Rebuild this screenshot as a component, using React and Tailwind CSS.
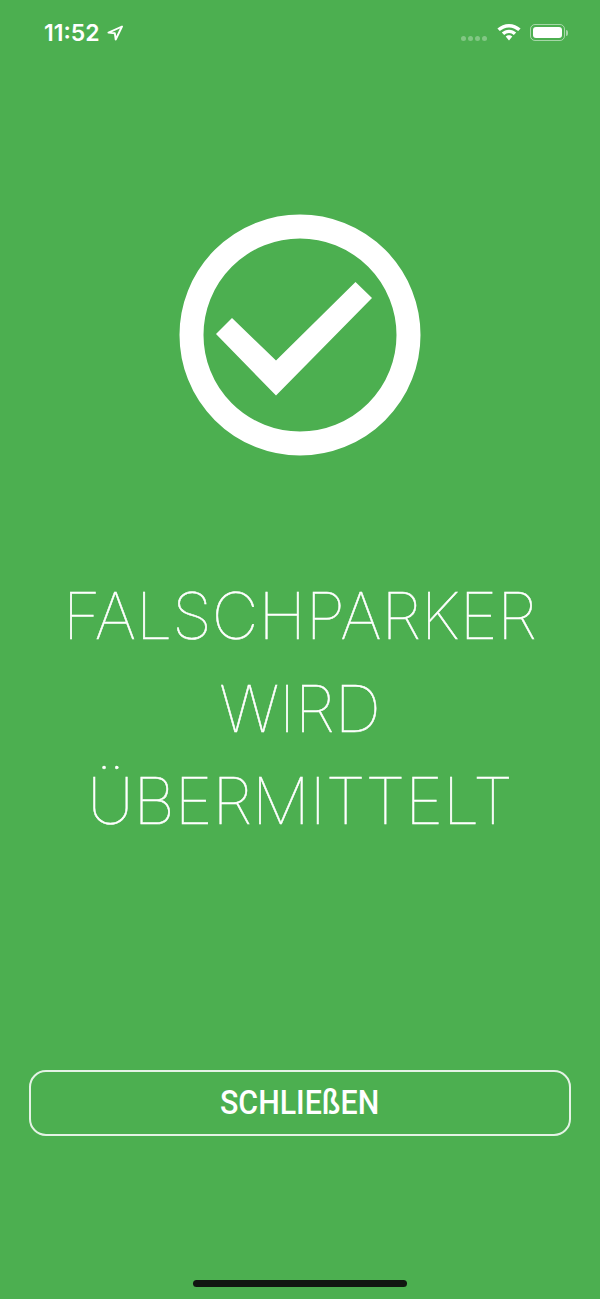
import React from "react";

function LocationArrow() {
  return (
    <svg width="16" height="16" viewBox="0 0 16 16" fill="none" className="ml-[7px]">
      <path d="M15 1.5 1.5 7.6l6.3.6.9 6.3z" stroke="white" strokeWidth="1.9" strokeLinejoin="round" />
    </svg>
  );
}

function StatusIcons() {
  return (
    <div className="flex items-center mt-[3px]">
      <div className="flex gap-[2px] mr-[10px] mt-[12px]">
        <span className="w-[5px] h-[5px] rounded-full bg-white/30" />
        <span className="w-[5px] h-[5px] rounded-full bg-white/30" />
        <span className="w-[5px] h-[5px] rounded-full bg-white/30" />
        <span className="w-[5px] h-[5px] rounded-full bg-white/30" />
      </div>
      <svg width="24" height="17" viewBox="0 0 24 17" className="mr-[9px]">
        <path d="M12 0C7.6 0 3.5 1.7.4 4.6l2.4 2.5C5.3 4.8 8.5 3.4 12 3.4s6.7 1.4 9.2 3.7l2.4-2.5C20.5 1.7 16.4 0 12 0z" fill="white" />
        <path d="M12 5.7c-2.8 0-5.3 1.1-7.2 2.9l2.4 2.4c1.3-1.2 3-2 4.8-2s3.5.8 4.8 2l2.4-2.4C17.3 6.8 14.8 5.7 12 5.7z" fill="white" />
        <path d="M12 11.2c-1.3 0-2.4.5-3.3 1.3l3.3 3.9 3.3-3.9c-.9-.8-2-1.3-3.3-1.3z" fill="white" />
      </svg>
      <div className="flex items-center">
        <div className="w-[35px] h-[17px] rounded-[5px] border border-white/50 p-[2px]">
          <div className="w-full h-full rounded-[3px] bg-white" />
        </div>
        <span className="w-[2px] h-[6px] ml-[1px] rounded-r-full bg-white/50" />
      </div>
    </div>
  );
}

function CheckCircle() {
  return (
    <svg width="242" height="242" viewBox="0 0 242 242" className="block">
      <circle cx="121" cy="121" r="108.5" fill="none" stroke="white" strokeWidth="24" />
      <path d="M37 120 53 104 97 146.5 176.5 68 193 84 97 181.5z" fill="white" />
    </svg>
  );
}

export default function App() {
  return (
    <div className="w-[600px] h-[1299px] bg-[#4caf50] flex flex-col items-center text-white overflow-hidden">
      <div className="w-full h-[66px] flex items-start justify-between pl-[44px] pr-[32px] pt-[21px]">
        <div className="flex items-center h-[24px]">
          <span className="text-[23px] leading-[24px] font-semibold font-['Inter',sans-serif]">11:52</span>
          <LocationArrow />
        </div>
        <StatusIcons />
      </div>

      <div className="mt-[148px]">
        <CheckCircle />
      </div>

      <h1 className="mt-[114px] text-center text-[64.5px] leading-[92.5px] font-thin [-webkit-text-stroke:0.5px_white] font-['Inter',sans-serif]">
        FALSCHPARKER
        <br />
        WIRD
        <br />
        ÜBERMITTELT
      </h1>

      <button className="mt-[222px] w-[542px] h-[66px] rounded-[17px] border-2 border-white/85 flex items-center justify-center">
        <span className="text-[33px] font-medium font-['Roboto',sans-serif] scale-x-[0.92]">SCHLIEßEN</span>
      </button>

      <div className="mt-auto mb-[12px] w-[214px] h-[7px] rounded-full bg-[#111611]" />
    </div>
  );
}
